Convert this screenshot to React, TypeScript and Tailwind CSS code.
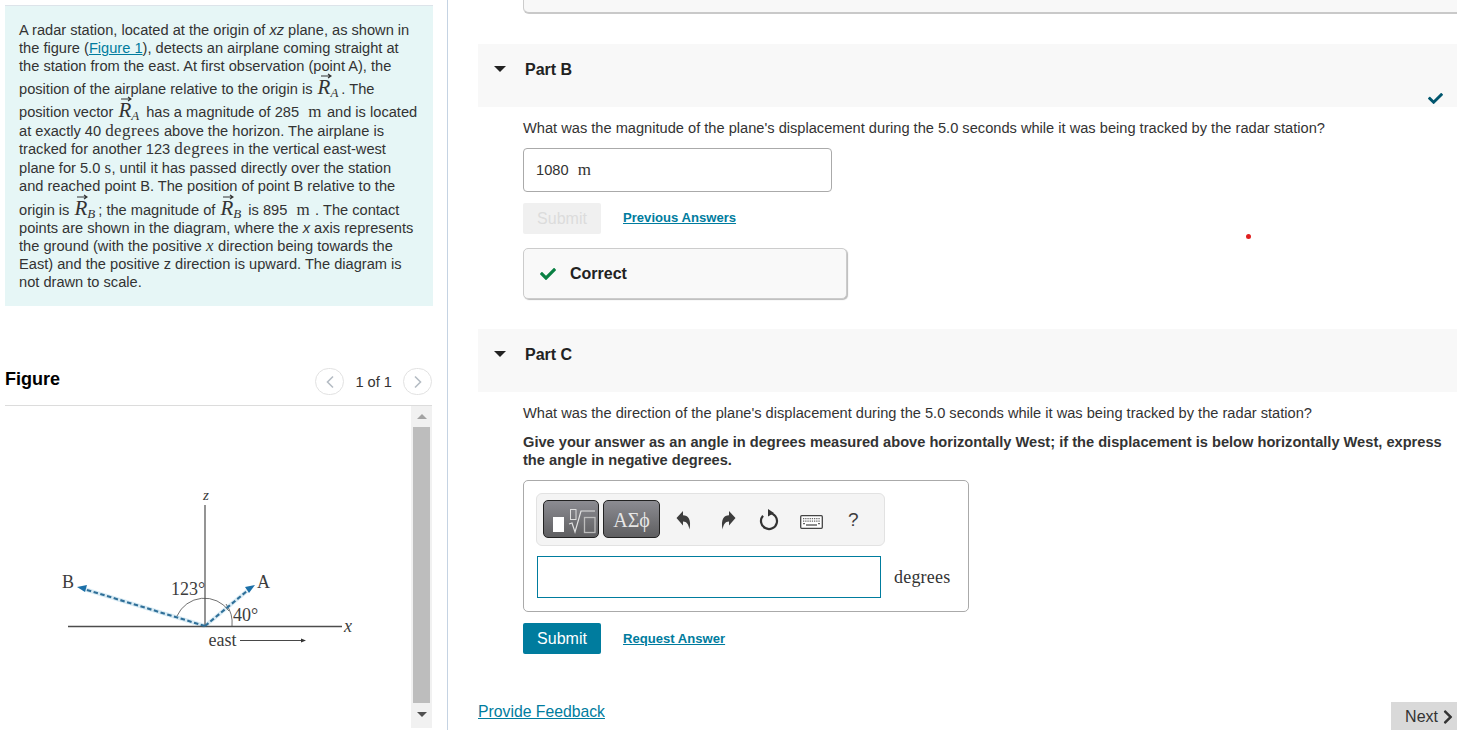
import { FaCheck, FaChevronRight } from 'react-icons/fa';

function VecR({ sub }: { sub: string }) {
  return (
    <span className="relative mr-[3px] ml-[1px] font-['Liberation_Serif',serif] text-[21px] leading-[0] text-[#333] italic">
      <svg className="absolute top-[-2px] left-[3px]" width="11" height="6" viewBox="0 0 11 6">
        <path d="M0 3h9M7 1l3 2-3 2" fill="none" stroke="#333" strokeWidth="1.2" />
      </svg>
      R
      <span className="relative top-[3px] text-[13px] leading-[0]">{sub}</span>
    </span>
  );
}

function Unit({ children, italic }: { children: string; italic?: boolean }) {
  return (
    <span className={`font-['Liberation_Serif',serif] text-[17px] leading-[0] tracking-[0.4px] text-[#333] ${italic ? 'italic' : ''}`}>
      {children}
    </span>
  );
}

function Meter() {
  return (
    <span className="mx-px">
      <Unit>m</Unit>
    </span>
  );
}

function Line({ className, children }: { className?: string; children: React.ReactNode }) {
  return <div className={`h-[18px] whitespace-pre ${className ?? ''}`}>{children}</div>;
}

function Triangle() {
  return <div className="h-0 w-0 border-x-[6px] border-t-[6px] border-x-transparent border-t-[#222]" />;
}

function PartHeader({ title, done }: { title: string; done?: boolean }) {
  return (
    <div className="relative flex h-[63px] bg-[#f8f8f8] pt-[16px]">
      <div className="mt-[6px] ml-[16px]">
        <Triangle />
      </div>
      <div className="ml-[19px] text-[16px] leading-5 font-bold text-[#222]">{title}</div>
      {done && <FaCheck className="absolute right-[14px] bottom-[1px] text-[15px] text-[#00566e]" />}
    </div>
  );
}

function Figure() {
  return (
    <svg className="h-[322px] w-[406px]" viewBox="5 406 406 322">
      <path d="M205 626L84 589M205 626L247 591" stroke="#d9ebf4" strokeWidth="4" fill="none" />
      <g stroke="#4d4d4d" fill="none">
        <path d="M68 626.5H342" strokeWidth="1.4" />
        <path d="M205 505V626" strokeWidth="1.2" />
        <path d="M177 616a30 30 0 0 1 52-5" strokeWidth="0.8" />
        <path d="M226 604a32 32 0 0 1 6 22" strokeWidth="0.8" />
      </g>
      <path d="M205 626L84 589" stroke="#2f6f98" strokeWidth="2.1" strokeDasharray="4.5 2.5" fill="none" />
      <path d="M205 626L247 591" stroke="#2f6f98" strokeWidth="2.1" strokeDasharray="4.5 2.5" fill="none" />
      <path d="M77 587l10-2-2 7z" fill="#1c70a8" />
      <path d="M255 585l-10 2 4 6z" fill="#1c70a8" />
      <path d="M240 640.5H303" stroke="#333" strokeWidth="0.9" />
      <path d="M306 640.5l-5-2v4z" fill="#333" />
      <g fontFamily="'Liberation Serif', serif" fontSize="18" fill="#3c3c3c">
        <text x="62" y="588">B</text>
        <text x="171" y="595">123°</text>
        <text x="257" y="588">A</text>
        <text x="233" y="621">40°</text>
        <text x="208.5" y="646">east</text>
        <text x="344" y="632" fontStyle="italic">x</text>
        <text x="203" y="500" fontStyle="italic" fontSize="15">z</text>
      </g>
    </svg>
  );
}

function Scrollbar() {
  return (
    <div className="flex h-[322px] w-[21px] flex-col items-center bg-[#f1f1f1]">
      <div className="mt-[8px] h-0 w-0 border-x-[5px] border-b-[5px] border-x-transparent border-b-[#a3a3a3]" />
      <div className="mt-[8px] h-[276px] w-[17px] bg-[#bdbdbd]" />
      <div className="mt-[9px] h-0 w-0 border-x-[5px] border-t-[5px] border-x-transparent border-t-[#505050]" />
    </div>
  );
}

function LeftColumn() {
  return (
    <div className="h-[730px] w-[448px] shrink-0 overflow-hidden border-r border-r-[#c5d3e3] pt-[5px]">
      <div className="ml-[5px] h-[301px] w-[428px] border-t border-t-[#dde4ea] bg-[#e6f6f6] pt-[15px] pl-[14px] text-[14.64px] leading-[18px] text-[#333]">
        <Line>A radar station, located at the origin of <i>xz</i> plane, as shown in</Line>
        <Line>the figure (<a className="text-[#007c9e] underline">Figure 1</a>), detects an airplane coming straight at</Line>
        <Line>the station from the east. At first observation (point A), the</Line>
        <Line className="mt-[5px]">position of the airplane relative to the origin is <VecR sub="A" />. The</Line>
        <Line className="mt-[5px]">position vector <VecR sub="A" /> has a magnitude of 285  <Meter /> and is located</Line>
        <Line className="mt-px">at exactly 40 <Unit>degrees</Unit> above the horizon. The airplane is</Line>
        <Line>tracked for another 123 <Unit>degrees</Unit> in the vertical east-west</Line>
        <Line className="mt-px">plane for 5.0 <Unit>s</Unit>, until it has passed directly over the station</Line>
        <Line>and reached point B. The position of point B relative to the</Line>
        <Line className="mt-[6px]">origin is <VecR sub="B" />; the magnitude of <VecR sub="B" /> is 895  <Meter /> . The contact</Line>
        <Line>points are shown in the diagram, where the <i>x</i> axis represents</Line>
        <Line>the ground (with the positive <Unit italic>x</Unit> direction being towards the</Line>
        <Line>East) and the positive z direction is upward. The diagram is</Line>
        <Line>not drawn to scale.</Line>
      </div>
      <div className="mt-[62px] ml-[5px] flex h-[38px] w-[427px] items-start justify-between border-b border-b-[#dcdcdc]">
        <div className="text-[18px] leading-[22px] font-bold text-black">Figure</div>
        <div className="flex items-center text-[14.64px] text-[#333]">
          <div className="flex h-[27px] w-[29px] items-center justify-center rounded-full border border-[#e2e2e2] text-[#b5bcc4]">
            <svg width="10" height="14" viewBox="0 0 10 14"><path d="M8 1.5L2.5 7 8 12.5" fill="none" stroke="currentColor" strokeWidth="1.6" /></svg>
          </div>
          <span className="mx-[11px] mt-[2px]">1 of 1</span>
          <div className="flex h-[27px] w-[29px] items-center justify-center rounded-full border border-[#e2e2e2] text-[#b5bcc4]">
            <svg width="10" height="14" viewBox="0 0 10 14"><path d="M2 1.5L7.5 7 2 12.5" fill="none" stroke="currentColor" strokeWidth="1.6" /></svg>
          </div>
        </div>
      </div>
      <div className="ml-[5px] flex w-[427px]">
        <Figure />
        <Scrollbar />
      </div>
    </div>
  );
}

function RootIcon() {
  return (
    <svg width="54" height="36" viewBox="0 0 54 36">
      <rect x="9" y="16" width="11" height="15" fill="#fff" />
      <g fill="none">
        <rect x="26.5" y="8.5" width="5.5" height="10" stroke="#ddd" strokeWidth="1" />
        <path d="M25 23l3-1 3 9 6-21h14" stroke="#e2e2e2" strokeWidth="1.2" />
        <rect x="40.5" y="16.5" width="10.5" height="15" stroke="#bdbdbd" strokeWidth="1.3" />
      </g>
    </svg>
  );
}

function UndoIcon({ flip }: { flip?: boolean }) {
  return (
    <svg className={flip ? '-scale-x-100' : ''} width="16" height="20" viewBox="0 0 16 20">
      <path d="M0.5 8L7 1v4.2C12 5.2 15.5 9 13.5 19.5 12.5 14.5 11 11.5 7 11.5V15.5z" fill="#3d3d3d" />
    </svg>
  );
}

function ResetIcon() {
  return (
    <svg width="20" height="22" viewBox="0 0 20 22">
      <path d="M10 4a8 8 0 1 1-6 2.7" fill="none" stroke="#333" strokeWidth="2.2" />
      <path d="M9 0l6 4-6 3.6z" fill="#333" />
    </svg>
  );
}

function KeyboardIcon() {
  return (
    <svg width="23" height="14" viewBox="0 0 23 14">
      <rect x="0.7" y="0.7" width="21.6" height="12.6" rx="1" fill="#fff" stroke="#444" strokeWidth="1.3" />
      <path d="M3 3.7h17M3 6.2h17" stroke="#666" strokeWidth="1.3" strokeDasharray="1.3 0.9" />
      <path d="M3 8.7h2M18 8.7h2M6 10h11" stroke="#666" strokeWidth="1.3" />
    </svg>
  );
}

function AnswerBox() {
  return (
    <div className="h-[132px] w-[446px] rounded-[5px] border border-[#aaa] pt-[12px] pl-[12px]">
      <div className="flex h-[53px] w-[349px] items-center rounded-[6px] border border-[#e2e2e2] bg-[#f4f4f4] pl-[6px] text-[#3d3d3d]">
        <div className="mb-[1px] flex h-[38px] w-[56px] items-center justify-center rounded-[5px] border border-[#222] bg-linear-to-b from-[#8c8c92] to-[#5f5f61]">
          <RootIcon />
        </div>
        <div className="mb-[1px] ml-[4px] flex h-[38px] w-[57px] items-center justify-center rounded-[5px] border border-[#222] bg-linear-to-b from-[#8c8c92] to-[#5f5f61] pt-[2px] font-['Liberation_Serif',serif] text-[20px] text-[#e6e6e6]">
          ΑΣϕ
        </div>
        <div className="ml-[16px]">
          <UndoIcon />
        </div>
        <div className="ml-[28px]">
          <UndoIcon flip />
        </div>
        <div className="ml-[23px]">
          <ResetIcon />
        </div>
        <div className="mt-[4px] ml-[21px]">
          <KeyboardIcon />
        </div>
        <span className="mt-[1px] ml-[25px] text-[19px]">?</span>
      </div>
      <div className="mt-[10px] ml-px flex items-center">
        <div className="h-[42px] w-[344px] border border-[#007c9e] bg-white" />
        <span className="ml-[13px] font-['Liberation_Serif',serif] text-[18px] tracking-[0.2px] text-[#333]">degrees</span>
      </div>
    </div>
  );
}

function RightColumn() {
  return (
    <div className="relative min-w-0 flex-1 overflow-hidden pl-[30px]">
      <div className="ml-[45px] h-[14px] rounded-bl-[6px] border-b-2 border-l border-b-[#c9c9c9] border-l-[#ccc] bg-[#f8f8f8]" />
      <div className="mt-[30px]">
        <PartHeader title="Part B" done />
      </div>
      <div className="pl-[45px] text-[14.64px] text-[#333]">
        <p className="mt-[12px] leading-[18px]">What was the magnitude of the plane's displacement during the 5.0 seconds while it was being tracked by the radar station?</p>
        <div className="mt-[11px] flex h-[44px] w-[309px] items-center rounded-[4px] border border-[#aaa] pt-[1px] pl-[12px] whitespace-pre">
          1080  <Meter />
        </div>
        <div className="mt-[11px] flex items-center">
          <div className="flex h-[31px] w-[78px] items-center justify-center rounded-[2px] bg-[#f0f0f0] text-[16px] text-[#dcdcdc]">Submit</div>
          <a className="mb-[2px] ml-[22px] text-[13.1px] font-bold text-[#007c9e] underline">Previous Answers</a>
        </div>
        <div className="mt-[14px] flex h-[51px] w-[324px] items-center rounded-[5px] border border-[#ccc] bg-[#f9f9f9] pl-[16px] shadow-[1px_1px_1px_#bbb]">
          <FaCheck className="text-[16px] text-[#0a8043]" />
          <span className="ml-[14px] text-[16px] font-bold text-[#222]">Correct</span>
        </div>
      </div>
      <div className="mt-[30px]">
        <PartHeader title="Part C" />
      </div>
      <div className="pl-[45px] text-[14.64px] text-[#333]">
        <p className="mt-[12px] leading-[18px]">What was the direction of the plane's displacement during the 5.0 seconds while it was being tracked by the radar station?</p>
        <p className="mt-[11px] w-[925px] leading-[18px] font-bold">Give your answer as an angle in degrees measured above horizontally West; if the displacement is below horizontally West, express the angle in negative degrees.</p>
        <div className="mt-[11px]">
          <AnswerBox />
        </div>
        <div className="mt-[11px] flex items-center">
          <div className="flex h-[31px] w-[78px] items-center justify-center rounded-[2px] bg-[#007c9e] text-[16px] text-white">Submit</div>
          <a className="ml-[22px] text-[13.1px] font-bold text-[#007c9e] underline">Request Answer</a>
        </div>
      </div>
      <div className="mt-[48px] flex items-start justify-between">
        <a className="text-[15.75px] leading-5 text-[#007c9e] underline">Provide Feedback</a>
        <div className="flex h-[28px] w-[66px] items-center justify-end bg-[#d9d9d9] pt-[2px] pr-[1px] text-[16px] text-[#333]">
          Next
          <FaChevronRight className="ml-[2px] text-[16px]" />
        </div>
      </div>
      <div className="absolute top-[234px] left-[798px] h-[5px] w-[5px] rounded-full bg-[#e02020]" />
    </div>
  );
}

export default function App() {
  return (
    <div className="flex h-[730px] w-[1457px] overflow-hidden bg-white font-['Liberation_Sans',Arial,sans-serif]">
      <LeftColumn />
      <RightColumn />
    </div>
  );
}
